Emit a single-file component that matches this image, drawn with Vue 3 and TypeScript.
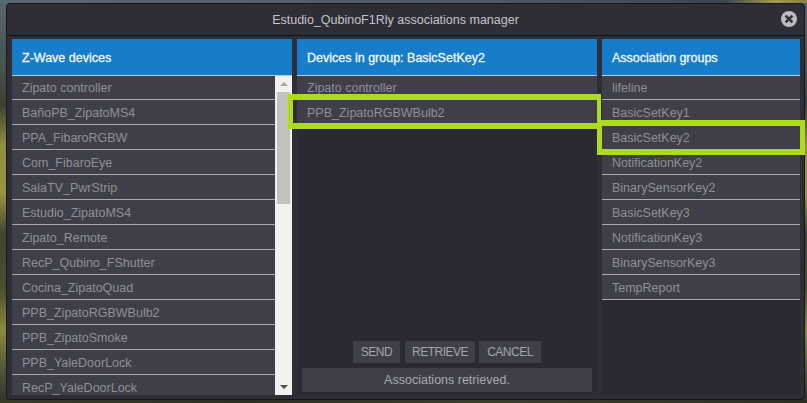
<script setup lang="ts">
const devices: string[] = ['Zipato controller','BañoPB_ZipatoMS4','PPA_FibaroRGBW','Com_FibaroEye','SalaTV_PwrStrip','Estudio_ZipatoMS4','Zipato_Remote','RecP_Qubino_FShutter','Cocina_ZipatoQuad','PPB_ZipatoRGBWBulb2','PPB_ZipatoSmoke','PPB_YaleDoorLock','RecP_YaleDoorLock']
const members: string[] = ['Zipato controller','PPB_ZipatoRGBWBulb2']
const groups: string[] = ['lifeline','BasicSetKey1','BasicSetKey2','NotificationKey2','BinarySensorKey2','BasicSetKey3','NotificationKey3','BinarySensorKey3','TempReport']
</script>

<template>
  <div class="page">
    <div class="dialog">
      <div class="titlebar">
        <span class="title">Estudio_QubinoF1Rly associations manager</span>
        <svg class="close" width="18" height="18" viewBox="0 0 18 18">
          <circle cx="9" cy="9" r="8" fill="#bdbdc2" />
          <path d="M5.6 5.6 12.4 12.4M12.4 5.6 5.6 12.4" stroke="#34343c" stroke-width="2.6" />
        </svg>
      </div>
      <div class="columns">
        <section class="col col-devices">
          <h2 class="head">Z-Wave devices</h2>
          <div class="scrollwrap">
            <ul class="list">
              <li v-for="d in devices" :key="d" class="row">{{ d }}</li>
            </ul>
            <div class="scrollbar">
              <span class="arrow up"></span>
              <div class="track"><div class="thumb"></div></div>
              <span class="arrow down"></span>
            </div>
          </div>
        </section>
        <section class="col col-members">
          <h2 class="head">Devices in group: BasicSetKey2</h2>
          <ul class="list grow">
            <li v-for="(m, i) in members" :key="m" class="row" :class="{ last: i === 1 }">
              {{ m }}
              <span v-if="i === 1" class="mark mark-member"></span>
            </li>
          </ul>
          <div class="actions">
            <button class="btn btn-send">SEND</button>
            <button class="btn btn-retrieve">RETRIEVE</button>
            <button class="btn btn-cancel">CANCEL</button>
          </div>
          <div class="status">Associations retrieved.</div>
        </section>
        <section class="col col-groups">
          <h2 class="head">Association groups</h2>
          <ul class="list grow">
            <li v-for="g in groups" :key="g" class="row">
              {{ g }}
              <span v-if="g === 'BasicSetKey2'" class="mark mark-group"></span>
            </li>
          </ul>
        </section>
      </div>
    </div>
  </div>
</template>

<style>
html, body { margin: 0; padding: 0; }
</style>

<style scoped>
.page {
  width: 807px;
  height: 403px;
  box-sizing: border-box;
  padding: 3px 2px 3px 6px;
  overflow: hidden;
  font-family: "Liberation Sans", Arial, sans-serif;
  background:
    linear-gradient(90deg, #5a6670 0%, #4e5a66 60%, #3c4650 90%, #a89a50 96%, #8a8040 100%) top / 100% 3px no-repeat,
    linear-gradient(90deg, #3a3c28, #2c2e22 30%, #3c3e2a 60%, #2c2e22 100%) bottom / 100% 3px no-repeat,
    linear-gradient(180deg, #5a6470 0%, #46504c 18%, #3c4032 26%, #8f8f40 36%, #9a9444 48%, #3f4430 58%, #4c5030 72%, #8a8a3c 82%, #50543a 92%, #30322a 100%);
}
.dialog {
  height: 100%;
  box-sizing: border-box;
  background: #2e2e37;
  border: 1px solid #17171b;
  border-radius: 4px;
  display: flex;
  flex-direction: column;
  padding: 0 4px 4px 5px;
}
.titlebar {
  height: 31px;
  flex: none;
  margin: 0 -4px 0 -5px;
  border-bottom: 1px solid #111115;
  display: flex;
  align-items: center;
  justify-content: center;
  padding-right: 20px;
  position: relative;
}
.title { color: #c4c4c8; font-size: 12.5px; }
.close { position: absolute; right: 6px; top: 6px; }
.columns {
  flex: 1;
  min-height: 0;
  display: flex;
  gap: 5px;
  padding-top: 3px;
}
.col {
  display: flex;
  flex-direction: column;
  background: #2a2a32;
  min-height: 0;
}
.col-devices { width: 280px; }
.col-members { width: 300px; }
.col-groups { width: 198px; }
.head {
  margin: 0;
  height: 36px;
  flex: none;
  background: #177dca;
  color: #f2f8fc;
  font-size: 12.5px;
  font-weight: 400;
  -webkit-text-stroke: 0.3px #f2f8fc;
  line-height: 38px;
  padding-left: 10px;
  border-bottom: 1px solid #b4c8dc;
}
.list { list-style: none; margin: 0; padding: 0; }
.grow { flex: 1; min-height: 0; }
.row {
  height: 24px;
  line-height: 26px;
  border-bottom: 1px solid #a8a8b0;
  background: #3f3f49;
  color: #909096;
  font-size: 12.5px;
  padding-left: 10px;
  position: relative;
  white-space: nowrap;
}
.row:first-child { height: 23px; line-height: 25px; }
.row.last { border-bottom-color: #3f3f49; }
.scrollwrap {
  flex: 1;
  min-height: 0;
  display: flex;
  overflow: hidden;
}
.scrollwrap .list { flex: 1; min-width: 0; }
.scrollbar {
  width: 17px;
  flex: none;
  background: #f1f1f1;
  display: flex;
  flex-direction: column;
  align-items: center;
}
.track { flex: 1; width: 100%; box-sizing: border-box; padding: 0 2px; }
.thumb { height: 112px; background: #c1c1c1; }
.arrow { width: 0; height: 0; flex: none; border-left: 4px solid transparent; border-right: 4px solid transparent; }
.arrow.up { border-bottom: 4px solid #a8a8a8; margin: 6px 0; }
.arrow.down { border-top: 4px solid #505050; margin: 6px 0; }
.actions {
  flex: none;
  display: flex;
  justify-content: center;
  margin-bottom: 5px;
}
.btn {
  height: 22px;
  padding: 0;
  border: none;
  background: #3f3f49;
  color: #a4a4aa;
  font-family: inherit;
  font-size: 12px;
  letter-spacing: -0.5px;
}
.btn-send { width: 47px; }
.btn-retrieve { width: 70px; margin: 0 4px 0 5px; }
.btn-cancel { width: 62px; }
.status {
  flex: none;
  margin: 0 5px 3px;
  height: 24px;
  line-height: 24px;
  background: #3f3f49;
  color: #a8a8ae;
  font-size: 12.5px;
  text-align: center;
}
.mark {
  position: absolute;
  z-index: 1;
  box-sizing: border-box;
  border: 6px solid #aedb1f;
  pointer-events: none;
}
.mark-member { left: -9px; top: -6px; width: 313px; height: 35px; border-left-width: 5px; border-right-width: 4px; }
.mark-group { left: -5px; top: -5px; width: 208px; height: 35px; border-left-width: 5px; border-right-width: 5px; }
</style>
